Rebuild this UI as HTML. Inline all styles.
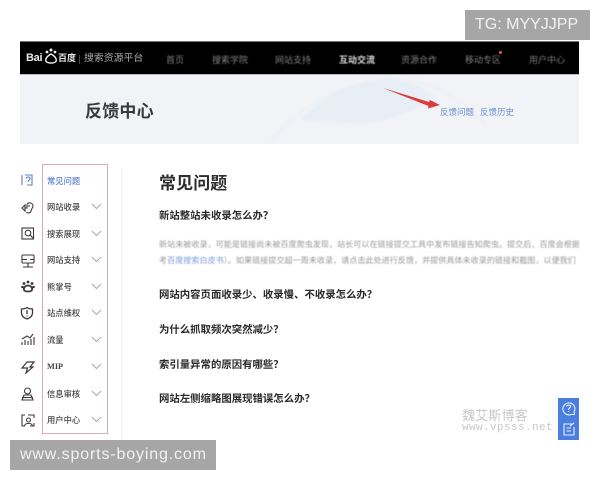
<!DOCTYPE html>
<html lang="zh"><head><meta charset="utf-8"><style>
html,body{margin:0;padding:0;width:600px;height:480px;overflow:hidden;background:#fff}
body{position:relative;font-family:"Liberation Sans","Noto Sans CJK SC",sans-serif}
div,span{position:absolute;white-space:nowrap}
svg{position:absolute;overflow:visible}
.t{line-height:1}
.nav{top:54px;font-size:9px;line-height:12px;color:#b8b8b8;font-weight:300;filter:blur(.4px)}
.side{left:47px;font-size:8.300px;line-height:12px;color:#444;font-weight:500;filter:blur(.35px)}
.q{left:159px;font-size:10.400px;line-height:14px;color:#2a2a2a;font-weight:700;filter:blur(.3px)}
.p{left:159px;width:420px;overflow:hidden;font-size:8.100px;line-height:12px;color:#989898;filter:blur(.4px)}
</style></head><body>
<div style="left:20px;top:41px;width:559px;height:34px;background:#000;border-top:1px solid #777;border-bottom:1px solid #bbb;box-sizing:border-box"></div>
<div style="left:20px;top:75px;width:559px;height:69px;background:#f1f3f7"></div>
<svg style="left:250px;top:70px;filter:blur(1px)" width="329" height="74" viewBox="0 0 329 74" fill="none"><path d="M50 50C75 25 105 10 135 9C155 9 170 14 185 28C165 42 125 58 85 52C70 50 60 50 50 50Z" fill="#e8eef5"/><path d="M20 72C35 50 80 15 135 9C175 7 210 25 235 55" stroke="#e9edf3"/></svg>
<div class="t" style="left:26px;top:53px;font-size:11px;font-weight:700;color:#e8e8e8;letter-spacing:-.3px;filter:blur(.3px)">Bai</div>
<svg style="left:44px;top:48px" width="14" height="16" viewBox="0 0 14 16" fill="none"><g fill="#eee"><circle cx="3" cy="4" r="1.400"/><circle cx="7" cy="2" r="1.500"/><circle cx="11" cy="4" r="1.400"/></g><path d="M7 6C3 8 1 11 2 13.500C4 15.500 10 15.500 12 13.500C13 11 11 8 7 6Z" stroke="#eee" stroke-width="1.400"/></svg>
<div class="t" style="left:58px;top:54px;font-size:9px;font-weight:700;color:#e8e8e8;filter:blur(.3px)">百度</div>
<div style="left:79px;top:55px;width:1px;height:9px;background:#444"></div>
<div class="t" style="left:84px;top:54px;font-size:9.900px;color:#aaa;filter:blur(.35px)">搜索资源平台</div>
<div class="nav" style="left:166px">首页</div>
<div class="nav" style="left:212px">搜索学院</div>
<div class="nav" style="left:275px">网站支持</div>
<div class="nav" style="left:339px;color:#ddd;font-weight:700">互动交流</div>
<div class="nav" style="left:401px">资源合作</div>
<div class="nav" style="left:465px">移动专区</div>
<div style="left:499px;top:51px;width:3px;height:3px;border-radius:50%;background:#e0526a"></div>
<div class="nav" style="left:529px">用户中心</div>
<div class="t" style="left:85px;top:103px;font-size:17px;font-weight:700;color:#3a3a3a;letter-spacing:.2px;filter:blur(.25px)">反馈中心</div>
<svg style="left:380px;top:85px" width="62" height="25" viewBox="0 0 62 25"><path d="M3 3L49 17L50 15L60 20L48 23.500L48.500 21Z" fill="#dc3b3b"/></svg>
<div class="t" style="left:440px;top:108px;font-size:8.500px;color:#6d8fd0;filter:blur(.35px)">反馈问题</div>
<div class="t" style="left:480px;top:108px;font-size:8.500px;color:#6d8fd0;filter:blur(.35px)">反馈历史</div>

<div style="left:465px;top:10px;width:125px;height:30px;background:#a6a6a6"></div>
<div class="t" style="left:475px;top:17px;font-size:16px;color:#f2f2f2">TG: MYYJJPP</div>

<div style="left:42px;top:164px;width:66px;height:270px;border:1px solid #d9aeb2;box-sizing:border-box"></div>
<div style="left:121px;top:168px;width:1px;height:272px;background:#efefef"></div>
<div class="side" style="top:175px;color:#5b7fd0">常见问题</div>
<div class="side" style="top:201px">网站收录</div>
<div class="side" style="top:228px">搜索展现</div>
<div class="side" style="top:254px">网站支持</div>
<div class="side" style="top:281px">熊掌号</div>
<div class="side" style="top:307px">站点维权</div>
<div class="side" style="top:334px">流量</div>
<div class="side" style="top:361px;font-weight:700;font-family:'Liberation Serif',serif">MIP</div>
<div class="side" style="top:388px">信息审核</div>
<div class="side" style="top:414px">用户中心</div>

<svg style="left:0;top:0" width="120" height="440" fill="none" stroke="#a5a8ad" stroke-width="1"><path d="M92 204L96.500 208.500L101 204M92 231L96.500 235.500L101 231M92 257L96.500 261.500L101 257M92 284L96.500 288.500L101 284M92 310L96.500 314.500L101 310M92 337L96.500 341.500L101 337M92 364L96.500 368.500L101 364M92 391L96.500 395.500L101 391M92 417L96.500 421.500L101 417"/></svg>
<svg style="left:0;top:0;filter:blur(.3px)" width="50" height="440" fill="none" stroke="#3a3a3a" stroke-width="1.100">
<g stroke="#5b7fd0"><path d="M22 175V185"/><path d="M25 175H32V185H27"/><path d="M26 178.500C26.500 176.500 30 176.500 30 178.500C30 180 28 180 28 182"/></g>
<path d="M22 208L25 205V211ZM25 208H27V205C27 202 33 202 33 206C33 208 31 209 31 211C31 213 27.500 213.500 26.500 212"/><path d="M29 205V207"/>
<rect x="22" y="228" width="11.500" height="11"/><circle cx="28" cy="233" r="2.800"/><path d="M30 235L33 238"/>
<rect x="22" y="255" width="12" height="8" rx="1"/><path d="M22 259.500H27M30 259.500H34M28 263V267M23 267H33"/>
<g fill="#333" stroke="none"><circle cx="24" cy="283.500" r="1.400"/><circle cx="28" cy="282" r="1.400"/><circle cx="32" cy="283.500" r="1.400"/><circle cx="22.500" cy="287" r="1.300"/><circle cx="33.500" cy="287" r="1.300"/></g>
<path stroke-width="1.800" d="M28 285.500C25 285.500 23.500 288 24 290C25 292 31 292 32 290C32.500 288 31 285.500 28 285.500Z"/>
<path stroke-width="1.300" d="M27 307.500C29 309 31 309 32.500 309V313C32.500 316 30 318 27 319C24 318 21.500 316 21.500 313V309C23 309 25 309 27 307.500Z"/><path stroke-width="1.300" d="M27 310V314M27 315.500V316.500"/>
<path d="M22 345V342M25 345V340M28 345V341M31 345V339M34 345V337M22 339L27 336L30 338L33 334"/>
<path stroke-width="1.200" d="M27 362L34 362L30 367H33L26 373L27.500 368H22Z"/>
<circle cx="27.500" cy="391" r="3"/><path d="M24 395H31L33 400H22Z"/><path d="M22 397.500H33"/>
<path d="M25 415H22V426H25M28 415H34V418M34 423V426H30"/><circle cx="28.500" cy="420" r="2"/><path d="M24.500 426C25 422.500 32 422.500 32.500 426"/>
</svg>

<div class="t" style="left:159px;top:175px;font-size:17px;font-weight:700;color:#2e2e2e;letter-spacing:.1px;filter:blur(.25px)">常见问题</div>
<div class="q" style="top:210px">新站整站未收录怎么办？</div>
<div class="p" style="top:239px">新站未被收录，可能是链接尚未被百度爬虫发现，站长可以在链接提交工具中发布链接告知爬虫。提交后，百度会根据</div>
<div class="p" style="top:255px">考<span style="position:static;color:#7d9ad8">百度搜索白皮书</span>）。如果链接提交超一周未收录，请点击此处进行反馈，并提供具体未收录的链接和截图，以便我们</div>
<div class="q" style="top:289px">网站内容页面收录少、收录慢、不收录怎么办？</div>
<div class="q" style="top:324px">为什么抓取频次突然减少？</div>
<div class="q" style="top:359px">索引量异常的原因有哪些？</div>
<div class="q" style="top:393px">网站左侧缩略图展现错误怎么办？</div>

<div class="t" style="left:462px;top:409px;font-size:13px;color:#c8c8c8;letter-spacing:.2px;filter:blur(.3px)">魏艾斯博客</div>
<div class="t" style="left:462px;top:423px;font-size:11px;color:#c8c8c8;font-family:'Liberation Mono',monospace;letter-spacing:.4px;filter:blur(.3px)">www.vpsss.net</div>

<div style="left:558px;top:398px;width:21px;height:42px;background:#4a7fe0"></div>
<svg style="left:558px;top:398px" width="21" height="42" fill="none" stroke="#e8f0ff" stroke-width="1.100"><path d="M16 14A6 6 0 1 0 13 16.500L16.500 16.500Z"/><path d="M8.500 8.500C9 6.500 12.500 6.500 12.500 8.500C12.500 10 10.500 10 10.500 12M10.500 13V14"/><path d="M15 26H6V37H16V29"/><path d="M8.500 30H13M8.500 33H13M12 28L16 25"/></svg>

<div style="left:10px;top:440px;width:206px;height:30px;background:#a6a6a6"></div>
<div class="t" style="left:20px;top:447px;font-size:16px;color:#f2f2f2;letter-spacing:.85px">www.sports-boying.com</div>
</body></html>
